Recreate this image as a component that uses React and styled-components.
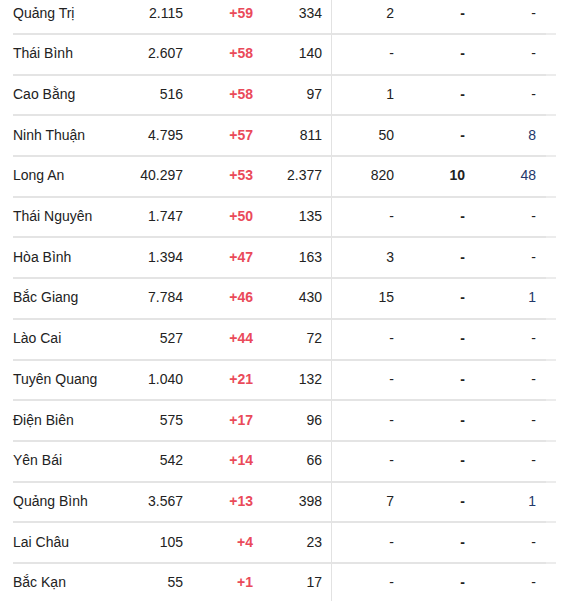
import styled, { createGlobalStyle } from "styled-components"

const GlobalStyle = createGlobalStyle`
    html, body {
        margin: 0;
        padding: 0;
        background: #fff;
        overflow: hidden;
    }
    body {
        font-family: "Liberation Sans", Arial, sans-serif;
        font-size: 14px;
        color: #222;
    }
`

const rows = [
    ["Quảng Trị", "2.115", "+59", "334", "2", "-", "-"],
    ["Thái Bình", "2.607", "+58", "140", "-", "-", "-"],
    ["Cao Bằng", "516", "+58", "97", "1", "-", "-"],
    ["Ninh Thuận", "4.795", "+57", "811", "50", "-", "8"],
    ["Long An", "40.297", "+53", "2.377", "820", "10", "48"],
    ["Thái Nguyên", "1.747", "+50", "135", "-", "-", "-"],
    ["Hòa Bình", "1.394", "+47", "163", "3", "-", "-"],
    ["Bắc Giang", "7.784", "+46", "430", "15", "-", "1"],
    ["Lào Cai", "527", "+44", "72", "-", "-", "-"],
    ["Tuyên Quang", "1.040", "+21", "132", "-", "-", "-"],
    ["Điện Biên", "575", "+17", "96", "-", "-", "-"],
    ["Yên Bái", "542", "+14", "66", "-", "-", "-"],
    ["Quảng Bình", "3.567", "+13", "398", "7", "-", "1"],
    ["Lai Châu", "105", "+4", "23", "-", "-", "-"],
    ["Bắc Kạn", "55", "+1", "17", "-", "-", "-"],
]

function App() {
    return (
        <>
            <GlobalStyle />
            <Table>
                {rows.map((r, index) => (
                    <Row key={`row+${index}`}>
                        <NameCell>{r[0]}</NameCell>
                        <NumCell>{r[1]}</NumCell>
                        <NumCell $tone="red">{r[2]}</NumCell>
                        <NumCell $divider>{r[3]}</NumCell>
                        <NumCell>{r[4]}</NumCell>
                        <NumCell $bold>{r[5]}</NumCell>
                        <NumCell $tone={r[6] === "-" ? undefined : "blue"}>{r[6]}</NumCell>
                        <Tail />
                    </Row>
                ))}
            </Table>
        </>
    )
}

export default App

const Table = styled.div`
    display: flex;
    flex-direction: column;
    margin: -5.69px 0 0 13px;
    width: 543px;
`

const Row = styled.div`
    display: grid;
    grid-template-columns: 100px 80px 70px 69px 72px 71px 71px 10px;
    height: 40.69px;
    box-sizing: border-box;
`

const Cell = styled.div`
    display: flex;
    align-items: center;
    border-bottom: 2px solid #e4e4e4;
    line-height: 16px;
    padding-bottom: 2px;
    white-space: nowrap;
`

const NameCell = styled(Cell)`
    color: #222;
`

const NumCell = styled(Cell)`
    justify-content: flex-end;
    padding-right: ${p => (p.$divider ? "9px" : "10px")};
    border-right: ${p => (p.$divider ? "1px solid #e2e2e2" : "none")};
    font-weight: ${p => (p.$bold || p.$tone === "red" ? 700 : 400)};
    color: ${p => (p.$tone === "red" ? "#ea4a5a" : p.$tone === "blue" ? "#22386a" : "#222")};
`

const Tail = styled(Cell)`
    border-bottom-color: #ececec;
`
